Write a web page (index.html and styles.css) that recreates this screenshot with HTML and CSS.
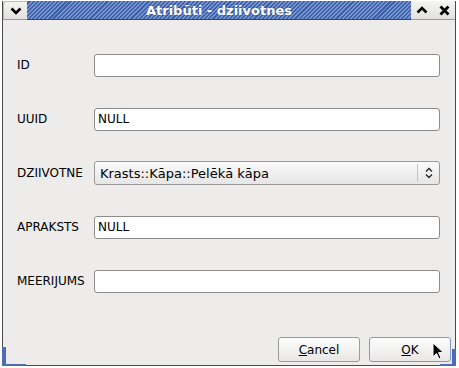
FILE: index.html
```html
<!DOCTYPE html>
<html lang="lv">
<head>
    <meta charset="UTF-8">
    <title>Atribūti - dziivotnes</title>
    <link rel="stylesheet" href="styles.css">
</head>
<body>
    <div class="window">
        <div class="titlebar">
            <div class="tb-btn tb-menu">
                <svg width="12" height="8" viewBox="0 0 12 8"><path d="M1.5 1.5 L6 6 L10.5 1.5" fill="none" stroke="#000" stroke-width="2.6"/></svg>
            </div>
            <div class="tb-title">Atribūti - dziivotnes</div>
            <div class="tb-btn">
                <svg width="12" height="8" viewBox="0 0 12 8"><path d="M1.5 6.5 L6 2 L10.5 6.5" fill="none" stroke="#000" stroke-width="2.6"/></svg>
            </div>
            <div class="tb-btn">
                <svg width="11" height="11" viewBox="0 0 11 11"><path d="M1.5 1.5 L9.5 9.5 M9.5 1.5 L1.5 9.5" fill="none" stroke="#000" stroke-width="2.8"/></svg>
            </div>
        </div>

        <div class="content">
            <div class="row">
                <label class="lbl">ID</label>
                <input class="field" type="text" value="">
            </div>
            <div class="row">
                <label class="lbl">UUID</label>
                <input class="field" type="text" value="NULL">
            </div>
            <div class="row">
                <label class="lbl">DZIIVOTNE</label>
                <div class="combo">
                    <span class="combo-text">Krasts::Kāpa::Pelēkā kāpa</span>
                    <span class="combo-sep"></span>
                    <svg class="combo-arrows" width="8" height="12" viewBox="0 0 8 12"><path d="M1 4.5 L4 1.5 L7 4.5 M1 7.5 L4 10.5 L7 7.5" fill="none" stroke="#222" stroke-width="1.3"/></svg>
                </div>
            </div>
            <div class="row">
                <label class="lbl">APRAKSTS</label>
                <input class="field" type="text" value="NULL">
            </div>
            <div class="row">
                <label class="lbl">MEERIJUMS</label>
                <input class="field" type="text" value="">
            </div>
        </div>

        <div class="buttons">
            <button class="btn"><u>C</u>ancel</button>
            <button class="btn btn-default"><u>O</u>K</button>
        </div>

        <span class="grip grip-left"></span>
        <span class="grip grip-right"></span>
    </div>

    <!-- mouse pointer over the OK button -->
    <svg class="pointer" width="13" height="19" viewBox="0 0 13 19">
        <path d="M1 1 L1 15 L4.5 11.5 L7 17 L9 16 L6.6 10.6 L11.5 10.6 Z" fill="#000" stroke="#fff" stroke-width="1"/>
    </svg>
</body>
</html>
```

FILE: styles.css
```css
body {
    margin: 0;
    background: #fff;
    font-family: "DejaVu Sans", sans-serif;
    font-size: 12px;
    color: #000;
}
.window {
    position: relative;
    box-sizing: border-box;
    width: 454px;
    height: 365px;
    margin: 1px 3px 0 2px;
    border: 1px solid #4a4a4a;
    border-top: none;
    background: #edeceb;
    display: flex;
    flex-direction: column;
}

/* title bar */
.titlebar {
    display: flex;
    height: 19px;
    flex-shrink: 0;
}
.tb-btn {
    width: 22px;
    display: flex;
    align-items: center;
    justify-content: center;
    background: linear-gradient(#f4f4f3, #e2e1df);
    border-bottom: 1px solid #9a9a9a;
}
.tb-menu {
    width: 23px;
    border-top: 1px solid #b8b8b8;
    border-left: 1px solid #b8b8b8;
    border-top-left-radius: 4px;
}
.tb-title {
    flex: 1;
    text-align: center;
    color: #fff;
    font-weight: bold;
    font-size: 13px;
    line-height: 19px;
    text-shadow: 0 0 2px #2c4782;
    background: repeating-linear-gradient(135deg, #7796d2 0 1.4px, #3f61a8 1.4px 2.9px);
    border-bottom: 1px solid #2b4682;
    box-sizing: border-box;
}

/* form */
.content {
    padding: 18px 14px 0 14px;
}
.row {
    display: flex;
    align-items: center;
    height: 54px;
}
.lbl {
    width: 77px;
    flex-shrink: 0;
}
.field {
    box-sizing: border-box;
    width: 346px;
    height: 23px;
    margin: 0;
    padding: 0 3px;
    border: 1px solid #8c8c8c;
    border-radius: 3px;
    background: #fff;
    font-family: "DejaVu Sans", sans-serif;
    font-size: 12px;
    color: #000;
    outline: none;
}
.combo {
    box-sizing: border-box;
    width: 346px;
    height: 24px;
    display: flex;
    align-items: center;
    padding-left: 5px;
    border: 1px solid #999;
    border-radius: 3px;
    background: linear-gradient(#fafafa, #e6e6e6);
    font-size: 13px;
}
.combo-text {
    flex: 1;
}
.combo-sep {
    width: 1px;
    height: 18px;
    background: #c4c4c4;
    margin-right: 7px;
}
.combo-arrows {
    margin-right: 6px;
}

/* buttons */
.buttons {
    margin-top: auto;
    display: flex;
    justify-content: flex-end;
    gap: 9px;
    padding: 0 4px 3px 0;
}
.btn {
    box-sizing: border-box;
    width: 82px;
    height: 25px;
    margin: 0;
    padding: 0;
    border: 1px solid #9c9c9c;
    border-radius: 3px;
    background: linear-gradient(#fdfdfd, #e8e7e5);
    font-family: "DejaVu Sans", sans-serif;
    font-size: 12px;
    color: #000;
}
.btn-default {
    border-color: #7f98c6;
}

/* resize grips in the frame corners */
.grip {
    position: absolute;
    bottom: -2px;
    border-bottom: 3px solid #4c6cb4;
}
.grip-left {
    left: -1px;
    width: 20px;
    height: 17px;
    border-left: 4px solid #4c6cb4;
}
.grip-right {
    right: -1px;
    width: 12px;
    height: 15px;
    border-right: 4px solid #4c6cb4;
}

.pointer {
    position: absolute;
    left: 432px;
    top: 342px;
}
```
